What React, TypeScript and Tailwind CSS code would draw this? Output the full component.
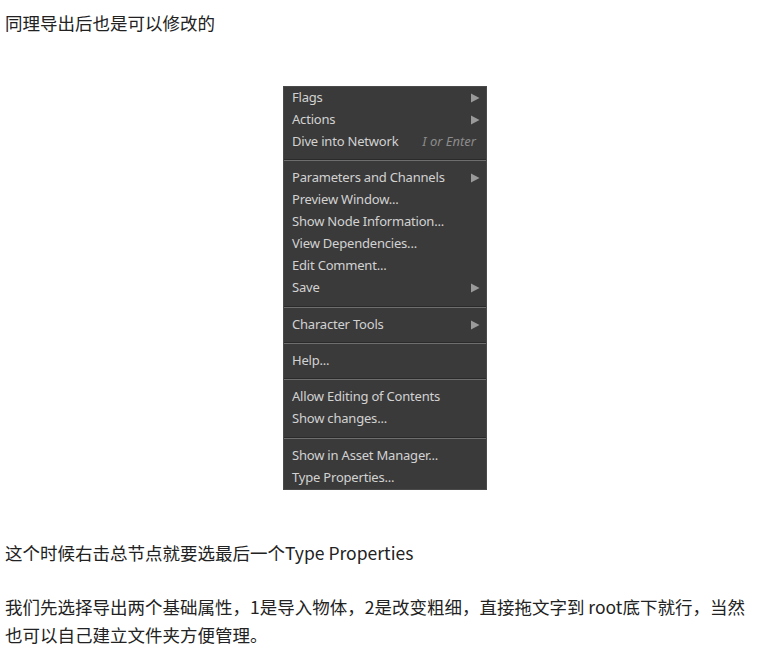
import React from "react";

type Item = { label: string; arrow?: boolean; hint?: string };

const GROUPS: Item[][] = [
  [
    { label: "Flags", arrow: true },
    { label: "Actions", arrow: true },
    { label: "Dive into Network", hint: "I or Enter" },
  ],
  [
    { label: "Parameters and Channels", arrow: true },
    { label: "Preview Window..." },
    { label: "Show Node Information..." },
    { label: "View Dependencies..." },
    { label: "Edit Comment..." },
    { label: "Save", arrow: true },
  ],
  [{ label: "Character Tools", arrow: true }],
  [{ label: "Help..." }],
  [{ label: "Allow Editing of Contents" }, { label: "Show changes..." }],
  [{ label: "Show in Asset Manager..." }, { label: "Type Properties..." }],
];

function Arrow() {
  return (
    <svg width="10" height="10" viewBox="0 0 10 10" className="shrink-0">
      <path d="M1 0.5 L9.5 5 L1 9.5 Z" fill="#9a9a9a" />
    </svg>
  );
}

function ContextMenu() {
  return (
    <div className="w-[204px] bg-[#3a3a3a] border border-[#4a4a4a] font-['Noto_Sans',sans-serif] text-[13px] text-[#d2d2d2]">
      {GROUPS.map((group, gi) => (
        <div key={gi}>
          {gi > 0 && (
            <div className={gi === 2 || gi === 5 ? "mt-[7px] mb-[6px]" : "my-[6px]"}>
              <div className="h-px bg-[#2a2a2a]" />
              <div className="h-px bg-[#6e6e6e]" />
            </div>
          )}
          {group.map((item) => (
            <div key={item.label} className="flex items-center justify-between h-[22px] pl-[8px] pr-[6px]">
              <span className="tracking-[-0.2px]">{item.label}</span>
              {item.arrow && <Arrow />}
              {item.hint && <span className="italic text-[#8c8c8c] pr-[4px]">{item.hint}</span>}
            </div>
          ))}
        </div>
      ))}
    </div>
  );
}

export default function App() {
  return (
    <div className="w-[769px] h-[656px] bg-white px-[5px] font-['Noto_Sans_CJK_SC',sans-serif] text-[17.5px] text-[#222]">
      <p className="pt-[11px] leading-[24px]">同理导出后也是可以修改的</p>
      <div className="mt-[51px] ml-[278px]">
        <ContextMenu />
      </div>
      <p className="mt-[49px] leading-[28px]">这个时候右击总节点就要选最后一个Type Properties</p>
      <p className="mt-[26px] leading-[28px]">
        我们先选择导出两个基础属性，1是导入物体，2是改变粗细，直接拖文字到 root底下就行，当然
        <br />
        也可以自己建立文件夹方便管理。
      </p>
    </div>
  );
}
